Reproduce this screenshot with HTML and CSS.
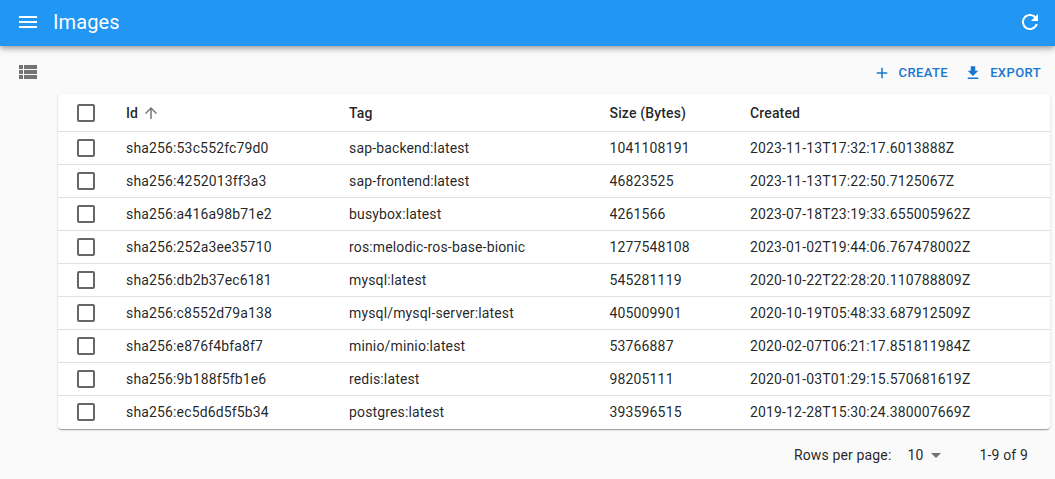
FILE: index.html
```html
<!DOCTYPE html>
<html lang="en">
<head>
<meta charset="utf-8">
<title>Images</title>
<link rel="stylesheet" href="styles.css">
</head>
<body>
<header class="appbar">
  <svg class="icon menu" viewBox="0 0 24 24"><path d="M3 18h18v-2H3v2zm0-5h18v-2H3v2zm0-7v2h18V6H3z"/></svg>
  <h1 class="title">Images</h1>
  <svg class="icon refresh" viewBox="0 0 24 24"><path d="M17.65 6.35C16.2 4.9 14.21 4 12 4c-4.42 0-7.99 3.58-7.99 8s3.57 8 7.99 8c3.73 0 6.84-2.55 7.73-6h-2.08c-.82 2.33-3.04 4-5.65 4-3.31 0-6-2.69-6-6s2.69-6 6-6c1.66 0 3.14.69 4.22 1.78L13 11h7V4l-2.35 2.35z"/></svg>
</header>
<div class="layout">
  <nav class="sidebar">
    <svg class="icon" viewBox="0 0 24 24"><path d="M3 14h4v-4H3v4zm0 5h4v-4H3v4zM3 9h4V5H3v4zm5 5h13v-4H8v4zm0 5h13v-4H8v4zM8 5v4h13V5H8z"/></svg>
  </nav>
  <main class="content">
    <div class="toolbar">
      <a class="action"><svg viewBox="0 0 24 24"><path d="M19 13h-6v6h-2v-6H5v-2h6V5h2v6h6v2z"/></svg><span>CREATE</span></a>
      <a class="action"><svg viewBox="0 0 24 24"><path d="M19 9h-4V3H9v6H5l7 7 7-7zM5 18v2h14v-2H5z"/></svg><span>EXPORT</span></a>
    </div>
    <div class="card">
      <table class="grid">
        <colgroup><col class="c-check"><col class="c-id"><col class="c-tag"><col class="c-size"><col></colgroup>
        <thead><tr><th><i class="box"></i></th><th><span class="sort">Id<svg viewBox="0 0 24 24"><path d="M4 12l1.41 1.41L11 7.83V20h2V7.83l5.58 5.59L20 12l-8-8-8 8z"/></svg></span></th><th>Tag</th><th>Size (Bytes)</th><th>Created</th></tr></thead>
        <tbody>
          <tr><td><i class="box"></i></td><td>sha256:53c552fc79d0</td><td>sap-backend:latest</td><td>1041108191</td><td>2023-11-13T17:32:17.6013888Z</td></tr>
          <tr><td><i class="box"></i></td><td>sha256:4252013ff3a3</td><td>sap-frontend:latest</td><td>46823525</td><td>2023-11-13T17:22:50.7125067Z</td></tr>
          <tr><td><i class="box"></i></td><td>sha256:a416a98b71e2</td><td>busybox:latest</td><td>4261566</td><td>2023-07-18T23:19:33.655005962Z</td></tr>
          <tr><td><i class="box"></i></td><td>sha256:252a3ee35710</td><td>ros:melodic-ros-base-bionic</td><td>1277548108</td><td>2023-01-02T19:44:06.767478002Z</td></tr>
          <tr><td><i class="box"></i></td><td>sha256:db2b37ec6181</td><td>mysql:latest</td><td>545281119</td><td>2020-10-22T22:28:20.110788809Z</td></tr>
          <tr><td><i class="box"></i></td><td>sha256:c8552d79a138</td><td>mysql/mysql-server:latest</td><td>405009901</td><td>2020-10-19T05:48:33.687912509Z</td></tr>
          <tr><td><i class="box"></i></td><td>sha256:e876f4bfa8f7</td><td>minio/minio:latest</td><td>53766887</td><td>2020-02-07T06:21:17.851811984Z</td></tr>
          <tr><td><i class="box"></i></td><td>sha256:9b188f5fb1e6</td><td>redis:latest</td><td>98205111</td><td>2020-01-03T01:29:15.570681619Z</td></tr>
          <tr><td><i class="box"></i></td><td>sha256:ec5d6d5f5b34</td><td>postgres:latest</td><td>393596515</td><td>2019-12-28T15:30:24.380007669Z</td></tr>
        </tbody>
      </table>
    </div>
    <footer class="pager">
      <span>Rows per page:</span>
      <span class="select">10<svg viewBox="0 0 24 24"><path d="M7 10l5 5 5-5z"/></svg></span>
      <span>1-9 of 9</span>
    </footer>
  </main>
</div>
</body>
</html>
```

FILE: styles.css
```css
* { box-sizing: border-box; }
body {
  margin: 0;
  height: 479px;
  overflow: hidden;
  background: #fafafa;
  color: rgba(0, 0, 0, 0.87);
  font: 14px/20px Roboto, sans-serif;
  letter-spacing: 0.15px;
}
svg { display: block; fill: currentColor; flex: none; }
.icon { width: 24px; height: 24px; }
.appbar {
  position: relative;
  display: flex;
  align-items: center;
  height: 46px;
  padding: 0 13px 2px 16px;
  background: #2196f3;
  color: #fff;
  box-shadow: 0 2px 4px -1px rgba(0,0,0,.2), 0 4px 5px rgba(0,0,0,.14), 0 1px 10px rgba(0,0,0,.12);
}
.title { flex: 1; margin: 0 0 0 13px; font-size: 20px; font-weight: 400; line-height: 32px; letter-spacing: 0.1px; }
.layout { display: flex; }
.sidebar { width: 58px; padding: 14px 16px; color: rgba(0, 0, 0, 0.54); }
.content { flex: none; width: 992px; }
.toolbar { display: flex; justify-content: flex-end; gap: 16px; height: 48px; padding: 5px 9px 0 0; align-items: center; color: #1976d2; }
.action { display: flex; align-items: center; gap: 8px; font-size: 13px; font-weight: 500; letter-spacing: 0.4px; }
.action svg { width: 18px; height: 18px; }
.card {
  border-radius: 4px;
  background: #fff;
  box-shadow: 0 2px 1px -1px rgba(0,0,0,.2), 0 1px 1px rgba(0,0,0,.14), 0 1px 3px rgba(0,0,0,.12);
}
.grid { width: 100%; table-layout: fixed; border-collapse: separate; border-spacing: 0; }
.c-check { width: 52px; }
.c-id { width: 223px; }
.c-tag { width: 260.5px; }
.c-size { width: 140.5px; }
.grid th, .grid td { height: 33px; padding: 0 16px; border-bottom: 1px solid #e0e0e0; text-align: left; white-space: nowrap; }
.grid th { height: 38px; font-weight: 500; }
.grid tbody tr:last-child td { border-bottom-color: transparent; }
.box { display: block; width: 18px; height: 18px; margin-left: 3px; border: 2px solid rgba(0,0,0,.6); border-radius: 2px; }
.sort { display: flex; align-items: center; gap: 4px; }
.sort svg { width: 18px; height: 18px; color: rgba(0,0,0,.54); }
.pager { display: flex; justify-content: flex-end; align-items: center; height: 52px; padding-right: 22px; }
.select { display: flex; align-items: center; margin: 0 32px 0 16px; }
.select svg { width: 24px; height: 24px; color: rgba(0,0,0,.54); }
```
